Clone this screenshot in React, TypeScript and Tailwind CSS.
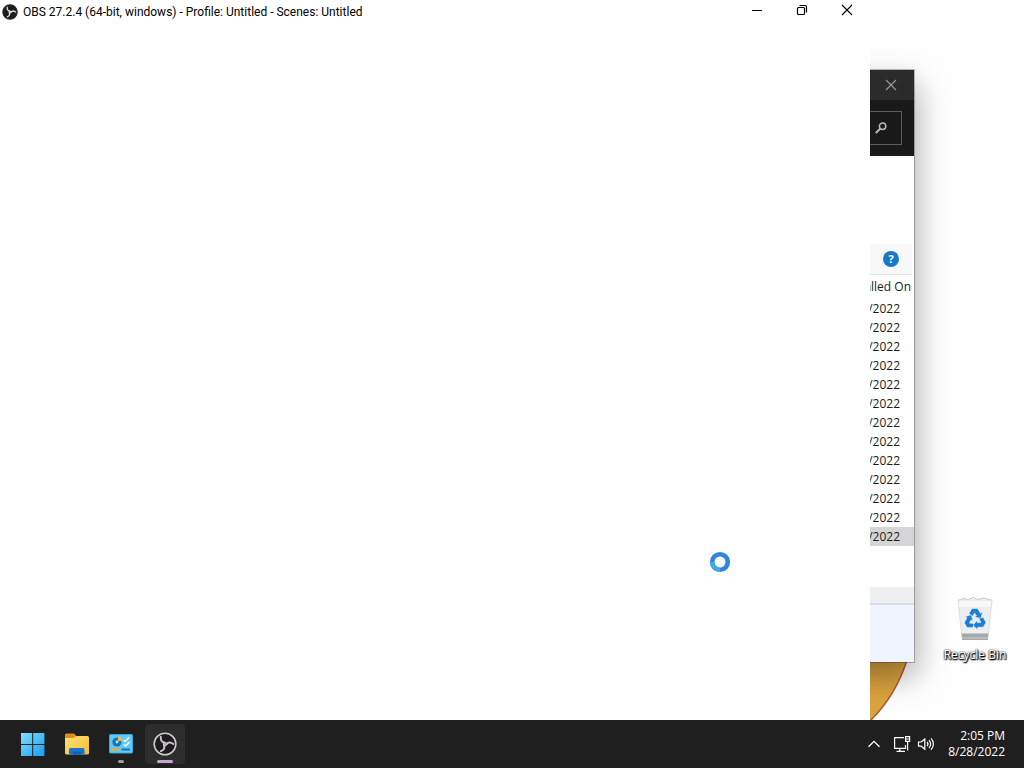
import React from 'react';

interface IconProps {
  className?: string;
}

interface DateRow {
  date: string;
  selected?: boolean;
}

const INSTALL_DATES: DateRow[] = [
  { date: '8/2/2022' },
  { date: '8/8/2022' },
  { date: '8/8/2022' },
  { date: '8/8/2022' },
  { date: '8/8/2022' },
  { date: '8/8/2022' },
  { date: '8/2/2022' },
  { date: '8/2/2022' },
  { date: '8/2/2022' },
  { date: '8/8/2022' },
  { date: '8/6/2022' },
  { date: '8/8/2022' },
  { date: '8/1/2022', selected: true },
];

const OBS_BLADE = 'M7.8 4.800C7.400 8 9 10.200 11.600 10.600c1 .2 1.800.500 2.200 1.200';

const ObsIcon = ({ className }: IconProps) => (
  <svg className={className} viewBox="0 0 24 24" fill="none" stroke="currentColor" aria-hidden="true">
    <circle cx="12" cy="12" r="10.8" fill="#1d1b1e" strokeWidth="1.6" />
    <g strokeWidth="1.900" strokeLinecap="round">
      <path d={OBS_BLADE} />
      <path d={OBS_BLADE} transform="rotate(120 12 12)" />
      <path d={OBS_BLADE} transform="rotate(240 12 12)" />
    </g>
  </svg>
);

const CloseIcon = ({ className }: IconProps) => (
  <svg className={className} viewBox="0 0 12 12" fill="none" stroke="currentColor" strokeWidth="1.1" aria-hidden="true">
    <path d="M1 1l10 10M11 1L1 11" />
  </svg>
);

const SearchIcon = () => (
  <svg className="h-3 w-3" viewBox="0 0 12 12" fill="none" stroke="currentColor" aria-hidden="true">
    <circle cx="7.6" cy="4.2" r="3.2" strokeWidth="1.5" />
    <path d="M5.3 6.5L.8 11" strokeWidth="1.9" />
  </svg>
);

const StartIcon = () => (
  <svg className="h-6 w-6" viewBox="0 0 24 24" aria-hidden="true">
    <defs>
      <linearGradient id="start" x1="0" y1="0" x2="1" y2="1">
        <stop offset="0" stopColor="#7fe0ff" />
        <stop offset="1" stopColor="#189df0" />
      </linearGradient>
    </defs>
    <path fill="url(#start)" d="M0 1h11.200v11H0zM12.200 1h11.200v11H12.200zM0 13h11.200v11H0zM12.200 13h11.200v11H12.200z" />
  </svg>
);

const FolderIcon = () => (
  <svg className="h-6 w-[26px]" viewBox="0 0 26 24" aria-hidden="true">
    <defs>
      <linearGradient id="folder" x1="0" y1="0" x2="1" y2="1">
        <stop offset="0" stopColor="#ffe07a" />
        <stop offset="1" stopColor="#f6bd32" />
      </linearGradient>
    </defs>
    <path fill="#d9920f" d="M1 3a1.5 1.5 0 0 1 1.5-1.5H10L12.5 4v5H1z" />
    <path fill="url(#folder)" d="M1 6h8.5L12 4h11.5A1.5 1.5 0 0 1 25 5.5V21a1.5 1.5 0 0 1-1.5 1.5h-21A1.5 1.5 0 0 1 1 21z" />
    <path fill="#1775cf" d="M5 22.500V17.500a1.500 1.500 0 0 1 1.500-1.500h12.500a1.500 1.500 0 0 1 1.500 1.500v5z" />
    <path fill="#0f5fae" d="M9 19.500h8v3H9z" />
  </svg>
);

const ControlPanelIcon = () => (
  <svg className="h-5 w-6" viewBox="0 0 24 20" fill="none" aria-hidden="true">
    <rect x=".5" y=".5" width="23" height="18.5" rx="1" fill="#62c8f4" stroke="#35a6df" />
    <circle cx="8" cy="8" r="4.6" fill="#1673bd" />
    <circle cx="8" cy="8" r="1.4" fill="#bfe9fb" />
    <path d="M9 7V2.4A4.6 4.6 0 0 1 13.2 7z" fill="#ffb52e" />
    <path d="M14.5 6l1.5 1.5L20 3.5M15 10.5l1.5 1.5 4-4" stroke="#fff" strokeWidth="1.4" />
    <path d="M3 15.5h8" stroke="#ffa51f" strokeWidth="2" />
    <path d="M12.5 15.5H21" stroke="#1673bd" strokeWidth="2" />
  </svg>
);

const NetworkIcon = () => (
  <svg className="h-[18px] w-[18px]" viewBox="0 0 18 18" fill="none" stroke="currentColor" strokeWidth="1.2" aria-hidden="true">
    <path d="M11 2.6H1.6v10.8h10.900V10M6.8 13.4v3M3.5 16.4h8.5M12.6 1.6h4v4.8h-4zM14.6 6.4v9.2M12.5 4h4" />
  </svg>
);

const VolumeIcon = () => (
  <svg className="h-[18px] w-[18px]" viewBox="0 0 18 18" fill="none" stroke="currentColor" strokeWidth="1.2" aria-hidden="true">
    <path d="M1.5 7v4.2h2.7l3.6 3V4L4.2 7zM10 7a3 3 0 0 1 0 4.2M12 5.2a5.5 5.5 0 0 1 0 7.8M14 3.4a8 8 0 0 1 0 11.4" />
  </svg>
);

const BIN_ARROW = 'M14 18.5l3-5h5.500l3 4.800 2-1.200-1.500 6.500-6.500-1.500 2-1.200-1.800-3-2.700 4z';

const RecycleBinIcon = () => (
  <svg className="h-12 w-10" viewBox="0 0 40 48" aria-hidden="true">
    <path d="M3 5h34l-4 38H7z" fill="#eceeef" />
    <path d="M3 5h34l-.7 7H3.700z" fill="#f8f8f8" />
    <path d="M6.500 38.500h27l-.500 6.500H7z" fill="#a5a7a8" />
    <path d="M4 5l5-1.500 4 1 5-2 5 2 6-1.500 3 1 4 1" fill="#fafafa" stroke="#c4c8ca" />
    <path d="M3 5h34l-4 38H7z" fill="none" stroke="#d7dadb" strokeWidth=".8" />
    <g fill="#1b7fd6" stroke="#eceeef" strokeWidth=".6">
      <path d={BIN_ARROW} />
      <path d={BIN_ARROW} transform="rotate(120 20 24.500)" />
      <path d={BIN_ARROW} transform="rotate(240 20 24.500)" />
    </g>
  </svg>
);

const BusySpinner = () => (
  <svg className="h-6 w-6" viewBox="0 0 24 24" fill="none" role="img" aria-label="Busy">
    <circle cx="12" cy="12" r="7.8" stroke="#2f86dc" strokeWidth="4.6" />
    <path d="M4.2 12A7.8 7.8 0 0 0 12 19.8" stroke="#41a8ea" strokeWidth="4.6" />
  </svg>
);

const ProgramsWindow = () => (
  <section aria-label="Installed programs" className="absolute top-[70px] left-[600px] flex w-[314px] flex-col bg-white shadow-[2px_14px_30px_rgba(0,0,0,0.35)] ring-1 ring-black/25">
    <header className="flex h-[30px] items-center justify-end bg-[#2b2b2b] px-[17px] text-[#9a9a9a]">
      <button type="button" aria-label="Close programs window">
        <CloseIcon className="h-3 w-3" />
      </button>
    </header>
    <div className="flex h-14 items-center justify-end bg-[#191919] px-3">
      <div className="flex h-[34px] w-40 items-center justify-end border border-[#5c5c5c] px-3.5 text-[#b8b8b8]">
        <button type="button" aria-label="Search">
          <SearchIcon />
        </button>
      </div>
    </div>
    <div className="mt-[88px] mr-0.5 flex h-[31px] items-center justify-end border-b border-[#e2e2e2] bg-[#f7f8f9] px-[13px]">
      <button type="button" aria-label="Help" className="flex h-4 w-4 items-center justify-center rounded-full bg-[#1779c9] text-[11px] leading-4 font-bold text-white">
        ?
      </button>
    </div>
    <table className="w-full text-[12px] text-[#1b1b1b]">
      <thead>
        <tr className="h-6">
          <th scope="col" className="p-0 pr-[3px] text-right font-normal">Installed On</th>
        </tr>
      </thead>
      <tbody>
        {INSTALL_DATES.map((row, index) => (
          <tr key={index} className={row.selected ? 'bg-[#d5d5d5]' : ''}>
            <td className="p-0 pr-3.5 text-right leading-[19px]">{row.date}</td>
          </tr>
        ))}
      </tbody>
    </table>
    <div className="mt-[41px] h-4 bg-[#eeeff0]" />
    <div className="h-[59px] border-t-2 border-[#d7dde6] bg-[#f0f4fe]" />
  </section>
);

const ObsWindow = () => (
  <main className="absolute inset-y-0 left-0 flex w-[870px] flex-col bg-white">
    <header className="flex h-6 items-center pl-0.5 text-black">
      <ObsIcon className="h-4 w-4 text-[#222] [&_g]:text-[#ddd]" />
      <h1 className="ml-[5px] flex-1 font-['Roboto',sans-serif] text-[12px] leading-6">OBS 27.2.4 (64-bit, windows) - Profile: Untitled - Scenes: Untitled</h1>
      <div className="flex h-5 self-start">
        <button type="button" aria-label="Minimize" className="flex w-[46px] items-center justify-center">
          <svg className="h-3 w-3" viewBox="0 0 12 12" stroke="currentColor" aria-hidden="true">
            <path d="M1 6.5h10" />
          </svg>
        </button>
        <button type="button" aria-label="Restore" className="flex w-11 items-center justify-center">
          <svg className="h-3 w-3" viewBox="0 0 12 12" fill="none" stroke="currentColor" strokeWidth="1.2" aria-hidden="true">
            <rect x="1.5" y="3.5" width="7" height="7" rx="1" />
            <path d="M3.5 1.5H9a1.5 1.5 0 0 1 1.5 1.5v5.5" />
          </svg>
        </button>
        <button type="button" aria-label="Close" className="flex w-[46px] items-center justify-center">
          <CloseIcon className="h-3 w-3" />
        </button>
      </div>
    </header>
  </main>
);

const Taskbar = () => (
  <footer className="flex h-12 shrink-0 items-center justify-between bg-[#1f1f1f] pr-[19px] pl-[13px] text-white">
    <nav aria-label="Taskbar" className="flex gap-1">
      <button type="button" aria-label="Start" className="flex h-10 w-10 items-center justify-center">
        <StartIcon />
      </button>
      <button type="button" aria-label="File Explorer" className="flex h-10 w-10 items-center justify-center">
        <FolderIcon />
      </button>
      <button type="button" aria-label="Programs" className="relative flex h-10 w-10 items-center justify-center">
        <ControlPanelIcon />
        <span className="absolute bottom-px h-[3px] w-1.5 rounded-full bg-[#a0a0a0]" />
      </button>
      <button type="button" aria-label="OBS Studio" className="relative flex h-10 w-10 items-center justify-center rounded bg-[#2d2d2d]">
        <ObsIcon className="h-6 w-6 text-[#c9c8ca]" />
        <span className="absolute bottom-px h-[3px] w-4 rounded-full bg-[#c9a2d8]" />
      </button>
    </nav>
    <div className="flex items-center">
      <button type="button" aria-label="Show hidden icons" className="mr-3">
        <svg className="h-3.5 w-3.5" viewBox="0 0 14 14" fill="none" stroke="currentColor" strokeWidth="1.3" aria-hidden="true">
          <path d="M1.5 9.8L7 4.3l5.5 5.500" />
        </svg>
      </button>
      <button type="button" aria-label="Network and volume" className="mr-[13px] flex gap-1.5">
        <NetworkIcon />
        <VolumeIcon />
      </button>
      <button type="button" className="text-right text-[12px] leading-4">
        <time className="block">2:05 PM</time>
        <time className="block">8/28/2022</time>
      </button>
    </div>
  </footer>
);

const App: React.FC = () => {
  return (
    <div className="flex h-screen flex-col overflow-hidden bg-white font-['Open_Sans','Noto_Sans',sans-serif]">
      <div className="relative flex-1 overflow-hidden bg-[#fefefe]">
        <svg className="absolute bottom-0 left-[780px] h-[60px] w-[140px]" viewBox="0 0 140 60" aria-hidden="true">
          <defs>
            <linearGradient id="disc" x1="0" y1="0" x2="0" y2="1">
              <stop offset="0" stopColor="#d9a440" />
              <stop offset="1" stopColor="#dda43c" />
            </linearGradient>
          </defs>
          <path d="M0 0h127Q116 35 91 60H0z" fill="url(#disc)" />
          <path d="M127 0Q116 35 91 60" fill="none" stroke="#b05a3c" strokeWidth="1.5" />
        </svg>
        <ProgramsWindow />
        <ObsWindow />
        <div className="absolute top-[550px] left-[708px]">
          <BusySpinner />
        </div>
        <button type="button" className="absolute top-[595px] left-[938px] flex w-[74px] flex-col items-center text-[12px] leading-4 text-white">
          <RecycleBinIcon />
          <span className="mt-1 [text-shadow:0_1px_2px_#000,0_0_2px_#000,1px_1px_1px_#000]">Recycle Bin</span>
        </button>
      </div>
      <Taskbar />
    </div>
  );
};

export default App;
